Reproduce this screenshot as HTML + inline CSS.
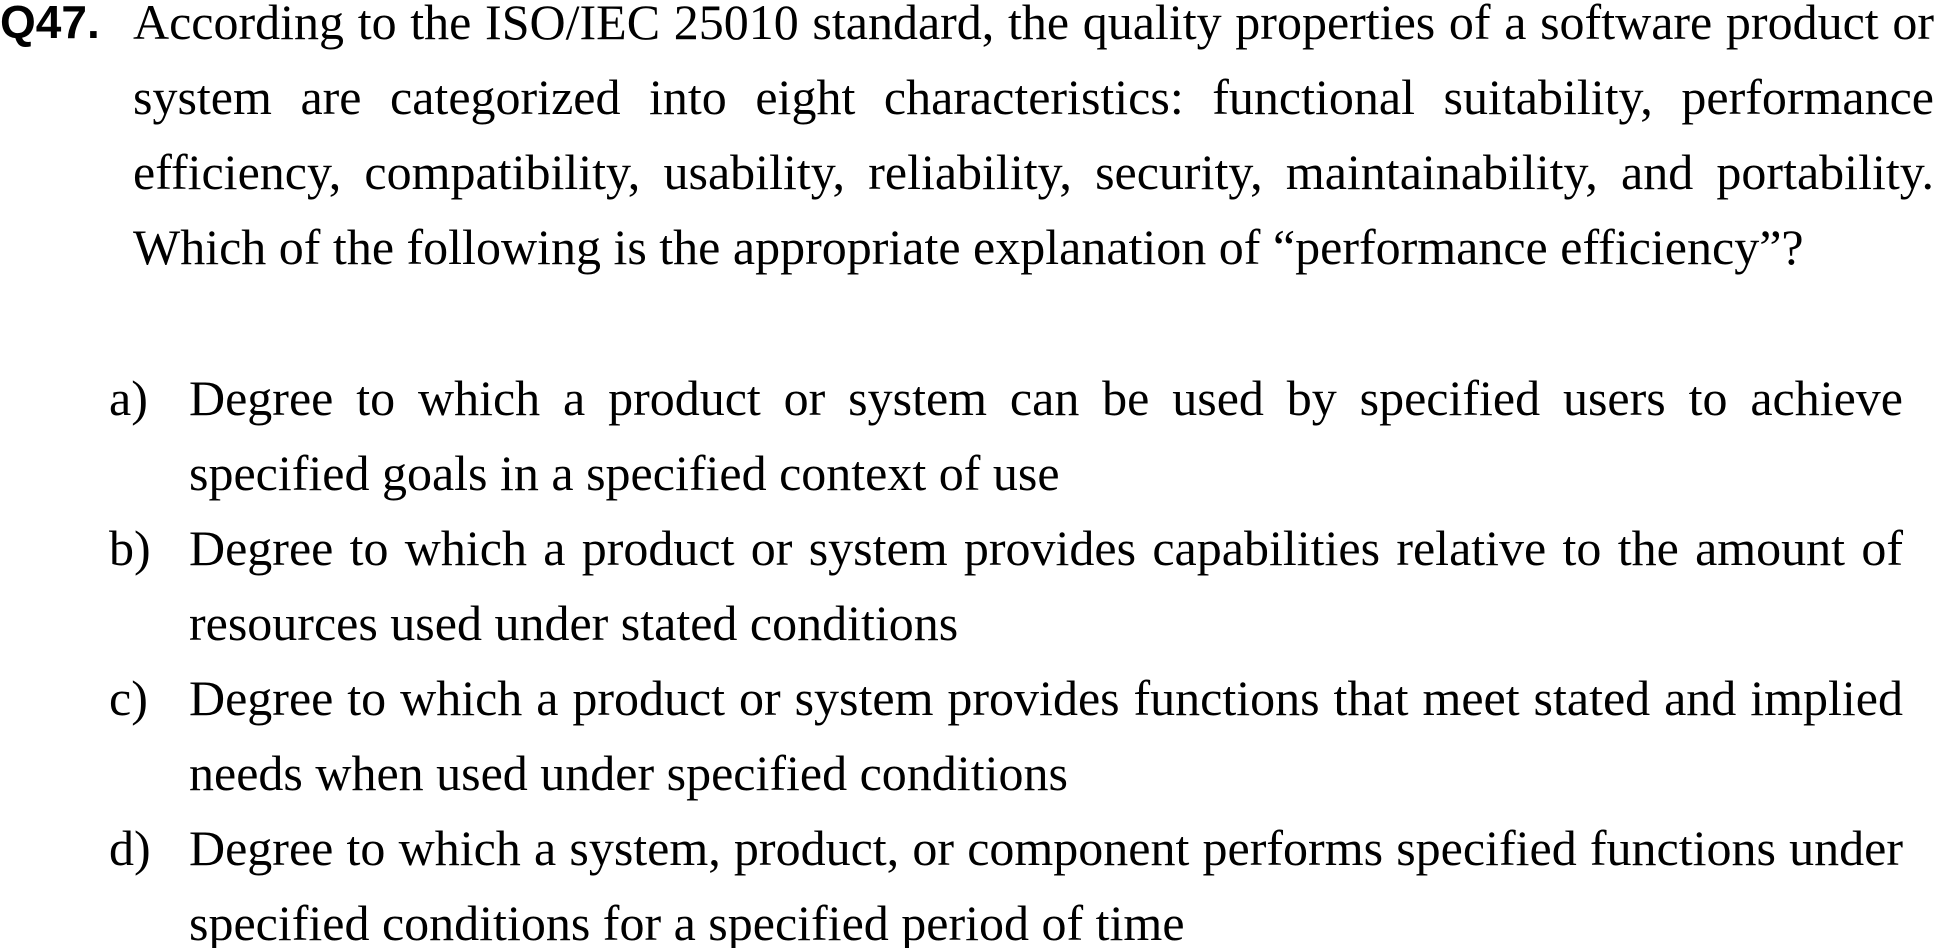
<!DOCTYPE html>
<html><head><meta charset="utf-8"><style>
html,body{margin:0;padding:0;background:#fff;width:1935px;height:948px;overflow:hidden}
body{position:relative;font-family:"Liberation Serif",serif;font-size:50px;line-height:75px;color:#000}
.q{position:absolute;left:0;top:-15px;font-family:"Liberation Sans",sans-serif;font-weight:bold;font-size:46px}
.stem{position:absolute;left:133px;top:-15px;width:1801px}
.j{text-align:justify;text-align-last:justify}
.opt{position:absolute;left:109px;width:1794px}
.opt .l{position:absolute;left:0;top:0}
.opt .t{margin-left:80px}
</style></head><body>
<div class="q">Q47.</div>
<div class="stem">
<div class="j">According to the ISO/IEC 25010 standard, the quality properties of a software product or</div>
<div class="j">system are categorized into eight characteristics: functional suitability, performance</div>
<div class="j">efficiency, compatibility, usability, reliability, security, maintainability, and portability.</div>
<div>Which of the following is the appropriate explanation of “performance efficiency”?</div>
</div>
<div class="opt" style="top:361px"><span class="l">a)</span><div class="t"><div class="j">Degree to which a product or system can be used by specified users to achieve</div><div>specified goals in a specified context of use</div></div></div>
<div class="opt" style="top:511px"><span class="l">b)</span><div class="t"><div class="j">Degree to which a product or system provides capabilities relative to the amount of</div><div>resources used under stated conditions</div></div></div>
<div class="opt" style="top:661px"><span class="l">c)</span><div class="t"><div class="j">Degree to which a product or system provides functions that meet stated and implied</div><div>needs when used under specified conditions</div></div></div>
<div class="opt" style="top:811px"><span class="l">d)</span><div class="t"><div class="j">Degree to which a system, product, or component performs specified functions under</div><div>specified conditions for a specified period of time</div></div></div>
</body></html>
